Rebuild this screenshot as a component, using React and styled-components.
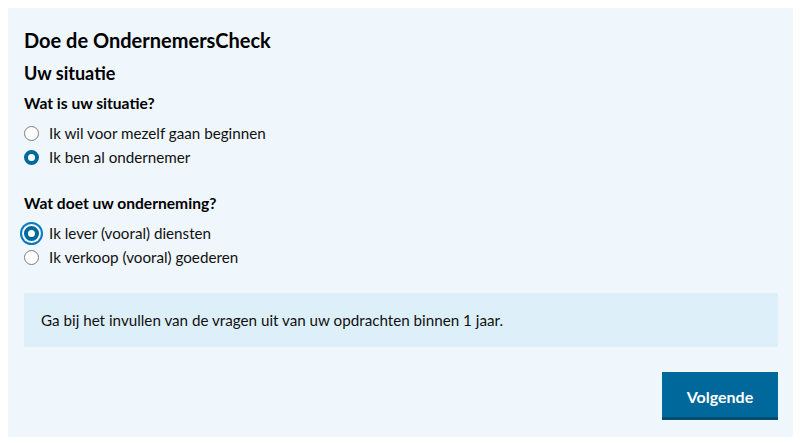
import React, { useState } from "react";
import styled, { createGlobalStyle } from "styled-components";

const GlobalStyle = createGlobalStyle`
  body {
    margin: 0;
    background: #ffffff;
    font-family: Lato, "Open Sans", sans-serif;
    color: #000000;
  }
`;

const Page = styled.div`
  padding: 8px 7px 6px 8px;
`;

const Panel = styled.form`
  background: #eff6fc;
  padding: 19px 15px 17px 16px;
  display: flex;
  flex-direction: column;
`;

const Title = styled.h1`
  margin: 0 0 8px;
  font-size: 20px;
  font-weight: 700;
  line-height: 26px;
`;

const SubTitle = styled.h2`
  margin: 0 0 7px;
  font-size: 18px;
  font-weight: 700;
  line-height: 24px;
`;

const Fieldset = styled.fieldset`
  border: 0;
  margin: 0 0 23px;
  padding: 0;
`;

const Legend = styled.legend`
  padding: 0;
  margin-bottom: 7px;
  font-size: 15.6px;
  font-weight: 700;
  line-height: 22px;
`;

const Option = styled.label`
  display: flex;
  align-items: center;
  gap: 10px;
  height: 24px;
  font-size: 15.2px;
  color: #111111;
  cursor: pointer;
`;

const Radio = styled.span`
  box-sizing: border-box;
  width: 15px;
  height: 15px;
  border-radius: 50%;
  flex: none;
  background: #ffffff;
  border: ${(p) => (p.$checked ? "4.5px solid #01689b" : "1px solid #7d7d7d")};
  box-shadow: ${(p) =>
    p.$focus ? "0 0 0 2px #eff6fc, 0 0 0 4px #0a78c2" : "none"};
`;

const Notice = styled.div`
  background: #ddeff8;
  padding: 16px 17px;
  font-size: 15.2px;
  line-height: 22px;
  color: #111111;
  margin-top: 1px;
`;

const Actions = styled.div`
  display: flex;
  justify-content: flex-end;
  margin-top: 25px;
`;

const Button = styled.button`
  width: 116px;
  height: 48px;
  border: 0;
  border-bottom: 3px solid #014c72;
  padding: 3px 0 0;
  background: #01689b;
  color: #ffffff;
  font-family: inherit;
  font-size: 16px;
  font-weight: 700;
  cursor: pointer;
`;

function RadioGroup({ legend, options, value, focus, onChange }) {
  return (
    <Fieldset>
      <Legend>{legend}</Legend>
      {options.map((o) => (
        <Option key={o} onClick={() => onChange(o)}>
          <Radio $checked={value === o} $focus={focus && value === o} />
          {o}
        </Option>
      ))}
    </Fieldset>
  );
}

export default function App() {
  const [situatie, setSituatie] = useState("Ik ben al ondernemer");
  const [soort, setSoort] = useState("Ik lever (vooral) diensten");

  return (
    <Page>
      <GlobalStyle />
      <Panel onSubmit={(e) => e.preventDefault()}>
        <Title>Doe de OndernemersCheck</Title>
        <SubTitle>Uw situatie</SubTitle>
        <RadioGroup
          legend="Wat is uw situatie?"
          options={["Ik wil voor mezelf gaan beginnen", "Ik ben al ondernemer"]}
          value={situatie}
          onChange={setSituatie}
        />
        <RadioGroup
          legend="Wat doet uw onderneming?"
          options={["Ik lever (vooral) diensten", "Ik verkoop (vooral) goederen"]}
          value={soort}
          focus
          onChange={setSoort}
        />
        <Notice>
          Ga bij het invullen van de vragen uit van uw opdrachten binnen 1 jaar.
        </Notice>
        <Actions>
          <Button type="submit">Volgende</Button>
        </Actions>
      </Panel>
    </Page>
  );
}
